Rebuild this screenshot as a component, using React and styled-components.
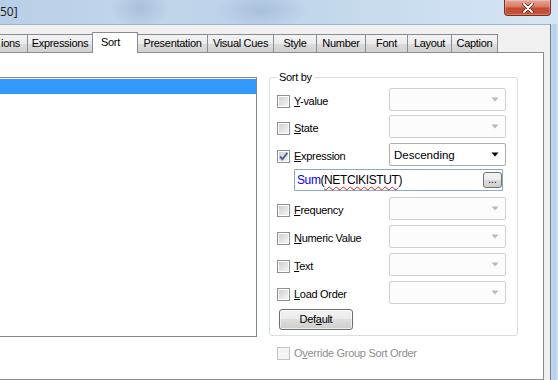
import styled, { createGlobalStyle } from 'styled-components';

const GlobalStyle = createGlobalStyle`
    html, body {
        margin: 0;
        padding: 0;
        overflow: hidden;
        background: #f0f0f0;
    }
`

const Window = styled.div`
    width: 558px;
    height: 380px;
    overflow: hidden;
    display: flex;
    flex-direction: column;
    font-family: "Liberation Sans", Arial, sans-serif;
    font-size: 11px;
    color: #000;
`

const TitleBar = styled.div`
    height: 24px;
    flex: none;
    display: flex;
    justify-content: space-between;
    align-items: flex-start;
    padding-right: 7px;
    background:
        radial-gradient(ellipse 30px 20px at 140px 8px, rgba(120,150,185,0.35), transparent),
        radial-gradient(ellipse 45px 18px at 262px 10px, rgba(120,150,185,0.3), transparent),
        linear-gradient(90deg, #b8cfe7 0%, #c2d6eb 25%, #bdd2e9 45%, #c9dcef 70%, #d5e5f5 100%);
`

const TitleText = styled.span`
    font-family: "Open Sans", "Liberation Sans", sans-serif;
    font-size: 12px;
    line-height: 16px;
    padding-top: 4px;
    color: #1a1a1a;
`

const CloseButton = styled.div`
    width: 47px;
    height: 16px;
    box-sizing: border-box;
    border: 1px solid #7a2e22;
    border-top: none;
    border-radius: 0 0 4px 4px;
    background: linear-gradient(#e7a797 0%, #d77a65 45%, #c24a31 55%, #c9553a 100%);
    display: flex;
    align-items: center;
    justify-content: center;
    box-shadow: inset 0 0 0 1px rgba(255,255,255,0.25);
`

const Body = styled.div`
    flex: 1;
    display: flex;
    min-height: 0;
`

const ClientArea = styled.div`
    flex: none;
    width: 551px;
    box-sizing: border-box;
    background: #f0f0f0;
    border-top: 1px solid #9fb3c9;
    border-right: 1px solid #6f7f92;
    padding-top: 7px;
    display: flex;
    flex-direction: column;
`

const FrameEdge = styled.div`
    flex: 1;
    background: linear-gradient(90deg, #c4d9ee, #b7cfe8 60%, #d2e3f4);
`

const TabRow = styled.div`
    display: flex;
    align-items: flex-end;
    height: 21px;
    margin-left: -1px;
`

const Tab = styled.div`
    position: relative;
    box-sizing: border-box;
    width: ${p => p.$w}px;
    height: ${p => (p.$active ? 21 : 18)}px;
    margin-left: -1px;
    margin-bottom: ${p => (p.$active ? 0 : 1)}px;
    border: 1px solid #898c95;
    border-bottom: none;
    background: ${p => (p.$active
        ? '#fff'
        : 'linear-gradient(#f3f3f3 0%, #ebebeb 50%, #dedede 50%, #d0d0d0 100%)')};
    z-index: ${p => (p.$active ? 2 : 0)};
    text-align: ${p => p.$align || 'center'};
    padding-left: ${p => (p.$active ? 8 : 0)}px;
    padding-right: ${p => (p.$align === 'right' ? 7 : 0)}px;
    padding-top: ${p => (p.$active ? 2 : 0)}px;
    line-height: ${p => (p.$active ? 15 : 17)}px;
    letter-spacing: -0.3px;
    white-space: nowrap;
    overflow: hidden;
    &:first-child { margin-left: 0; }
`

const Page = styled.div`
    position: relative;
    z-index: 1;
    margin: -1px 6px 0 -10px;
    height: 400px;
    border: 1px solid #898c95;
    background: #fff;
    padding-top: 24px;
    display: flex;
    align-items: flex-start;
    gap: 12px;
`

const ListBox = styled.div`
    flex: none;
    margin-left: 1px;
    width: 265px;
    height: 260px;
    box-sizing: border-box;
    border: 1px solid #828790;
    padding-top: 1px;
`

const ListRow = styled.div`
    height: 15px;
    background: ${p => (p.$selected ? '#3399ff' : 'transparent')};
`

const SideColumn = styled.div`
    width: 249px;
    flex: none;
    display: flex;
    flex-direction: column;
`

const GroupBox = styled.div`
    position: relative;
    box-sizing: border-box;
    border: 1px solid #d5dfe5;
    border-radius: 3px;
    padding: 10px 10px 5px 7px;
`

const GroupCaption = styled.span`
    position: absolute;
    top: -7px;
    left: 7px;
    padding: 0 2px;
    background: #fff;
    line-height: 13px;
    letter-spacing: -0.3px;
`

const Row = styled.div`
    display: flex;
    align-items: flex-start;
    height: ${p => p.$h}px;
`

const CheckLabel = styled.label`
    width: ${p => (p.$auto ? 'auto' : '112px')};
    flex: none;
    margin-top: ${p => (p.$auto ? 0 : 7)}px;
    display: flex;
    align-items: center;
    gap: 4px;
    line-height: 13px;
    letter-spacing: -0.3px;
    color: ${p => (p.$disabled ? '#8d8d8d' : '#000')};
    white-space: nowrap;
`

const Box = styled.span`
    width: 13px;
    height: 13px;
    flex: none;
    box-sizing: border-box;
    border: 1px solid ${p => (p.$disabled ? '#c2c2c2' : '#8e8f8f')};
    padding: 1px;
    background: ${p => (p.$disabled
        ? '#f4f4f4'
        : 'linear-gradient(135deg, #cdd0d4, #f4f4f4) content-box, #fff')};
    position: relative;
    display: flex;
    align-items: center;
    justify-content: center;
`

const Combo = styled.div`
    width: 117px;
    height: 23px;
    flex: none;
    box-sizing: border-box;
    border: 1px solid ${p => (p.$disabled ? '#d0d0d0' : '#acacac')};
    border-radius: 2px;
    background: ${p => (p.$disabled ? '#fcfcfc' : '#fff')};
    display: flex;
    align-items: center;
    justify-content: space-between;
    padding: 0 6px 0 4px;
    font-size: 11.5px;
`

const ExprField = styled.div`
    margin-left: 17px;
    width: 209px;
    height: 22px;
    box-sizing: border-box;
    border: 1px solid #88a9d3;
    border-radius: 1px;
    display: flex;
    align-items: center;
    justify-content: space-between;
    padding-left: 2px;
    font-size: 12px;
    letter-spacing: -0.4px;
    line-height: 20px;
`

const Fn = styled.span`
    color: #0000ff;
`

const Misspelled = styled.span`
    text-decoration: underline wavy #e02020;
    text-decoration-thickness: 1px;
    text-underline-offset: 2px;
`

const DotsButton = styled.div`
    width: 19px;
    height: 16px;
    box-sizing: border-box;
    border: 1px solid #707070;
    border-radius: 3px;
    background: linear-gradient(#f4f4f4 0%, #ebebeb 50%, #dcdcdc 50%, #cfcfcf 100%);
    font-size: 10px;
    line-height: 14px;
    text-align: center;
    letter-spacing: 0;
`

const Button = styled.div`
    margin-left: 2px;
    width: 74px;
    height: 21px;
    box-sizing: border-box;
    border: 1px solid #707070;
    border-radius: 3px;
    background: linear-gradient(#f2f2f2 0%, #ebebeb 50%, #dddddd 50%, #cfcfcf 100%);
    box-shadow: inset 0 0 0 1px rgba(255,255,255,0.6);
    text-align: center;
    line-height: 19px;
    letter-spacing: -0.3px;
`

const OverrideRow = styled.div`
    margin: 11px 0 0 8px;
`

const Arrow = ({ dark }) => (
    <svg width="8" height="5" viewBox="0 0 8 5">
        <polygon points="0.5,0.5 7.5,0.5 4,4.5" fill={dark ? '#000' : '#b9b9b9'} />
    </svg>
)

const CheckBox = ({ checked, disabled }) => (
    <Box $disabled={disabled}>
        {checked && (
            <svg width="11" height="11" viewBox="0 0 11 11" style={{ position: 'absolute', left: 0, top: 0 }}>
                <path d="M2 5.5 L4.5 8.2 L9.3 1.8" fill="none" stroke="#4a5f97" strokeWidth="1.9" />
            </svg>
        )}
    </Box>
)

const tabs = [
    { label: 'ions', w: 29, align: 'right' },
    { label: 'Expressions', w: 66 },
    { label: 'Sort', w: 46, active: true, align: 'left' },
    { label: 'Presentation', w: 71 },
    { label: 'Visual Cues', w: 67 },
    { label: 'Style', w: 44 },
    { label: 'Number', w: 50 },
    { label: 'Font', w: 43 },
    { label: 'Layout', w: 45 },
    { label: 'Caption', w: 47 },
]

const lowerRows = [
    { key: 'F', rest: 'requency' },
    { key: 'N', rest: 'umeric Value' },
    { key: 'T', rest: 'ext' },
    { key: 'L', rest: 'oad Order' },
]

const App = () => {
    return (
        <Window>
            <GlobalStyle />
            <TitleBar>
                <TitleText>50]</TitleText>
                <CloseButton>
                    <svg width="12" height="10" viewBox="0 0 12 10">
                        <path d="M2 1 L10 9 M10 1 L2 9" stroke="#5a1f16" strokeWidth="3.4" strokeLinecap="round" />
                        <path d="M2 1 L10 9 M10 1 L2 9" stroke="#fff" strokeWidth="2" strokeLinecap="round" />
                    </svg>
                </CloseButton>
            </TitleBar>
            <Body>
                <ClientArea>
                    <TabRow>
                        {tabs.map(t => (
                            <Tab key={t.label} $w={t.w} $active={t.active} $align={t.align}>{t.label}</Tab>
                        ))}
                    </TabRow>
                    <Page>
                        <ListBox>
                            <ListRow $selected />
                        </ListBox>
                        <SideColumn>
                            <GroupBox>
                                <GroupCaption>Sort by</GroupCaption>
                                <Row $h={27}>
                                    <CheckLabel><CheckBox /><span><u>Y</u>-value</span></CheckLabel>
                                    <Combo $disabled><span /><Arrow /></Combo>
                                </Row>
                                <Row $h={28}>
                                    <CheckLabel><CheckBox /><span><u>S</u>tate</span></CheckLabel>
                                    <Combo $disabled><span /><Arrow /></Combo>
                                </Row>
                                <Row $h={26}>
                                    <CheckLabel><CheckBox checked /><span><u>E</u>xpression</span></CheckLabel>
                                    <Combo><span>Descending</span><Arrow dark /></Combo>
                                </Row>
                                <Row $h={28}>
                                    <ExprField>
                                        <span><Fn>Sum</Fn>(<Misspelled>NETCIKISTUT</Misspelled>)</span>
                                        <DotsButton>...</DotsButton>
                                    </ExprField>
                                </Row>
                                {lowerRows.map(r => (
                                    <Row $h={28} key={r.key}>
                                        <CheckLabel><CheckBox /><span><u>{r.key}</u>{r.rest}</span></CheckLabel>
                                        <Combo $disabled><span /><Arrow /></Combo>
                                    </Row>
                                ))}
                                <Button>Def<u>a</u>ult</Button>
                            </GroupBox>
                            <OverrideRow>
                                <CheckLabel $disabled $auto>
                                    <CheckBox disabled />
                                    <span>O<u>v</u>erride Group Sort Order</span>
                                </CheckLabel>
                            </OverrideRow>
                        </SideColumn>
                    </Page>
                </ClientArea>
                <FrameEdge />
            </Body>
        </Window>
    )
}

export default App;
